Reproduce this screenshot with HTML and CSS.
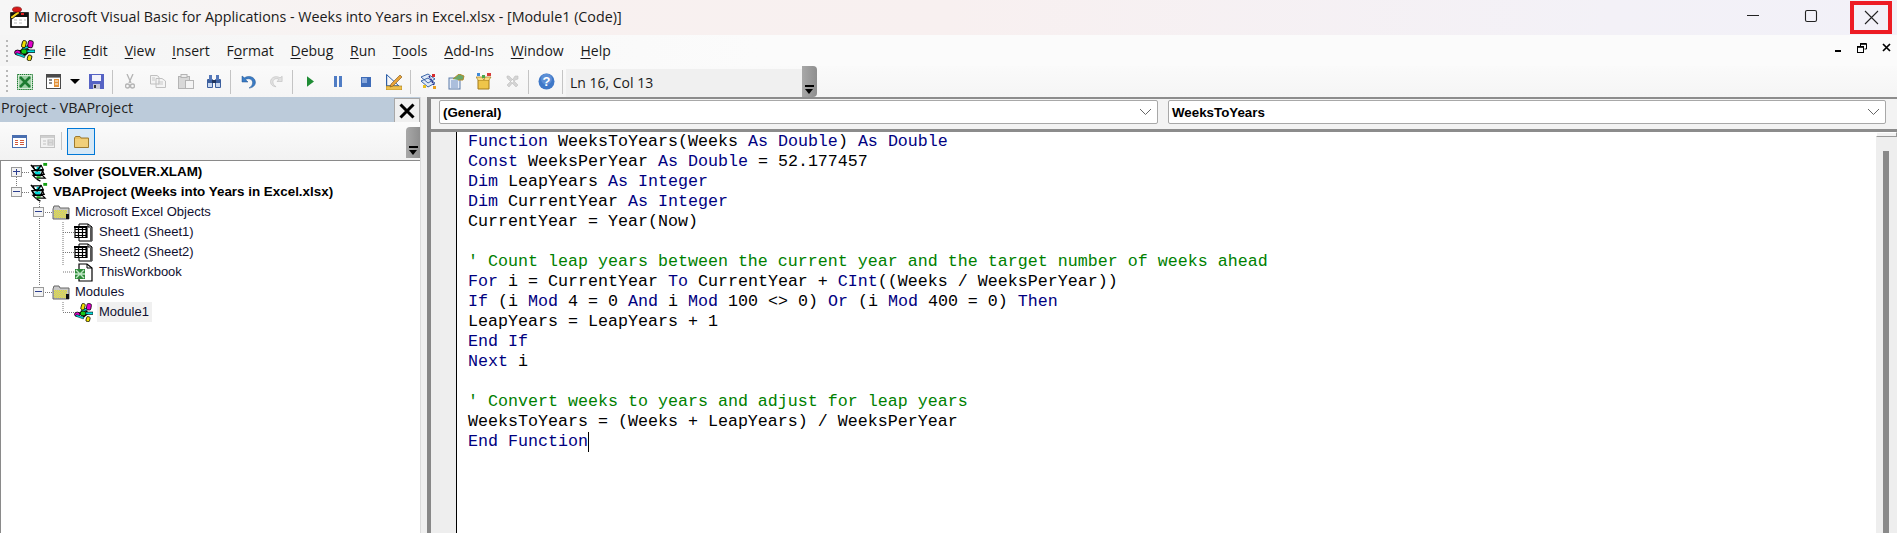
FILE: index.html
```html
<!DOCTYPE html>
<html lang="en">
<head>
<meta charset="utf-8">
<title>Microsoft Visual Basic for Applications</title>
<link rel="stylesheet" href="styles.css">
</head>
<body>
<svg class="defs" width="0" height="0" aria-hidden="true">
  <symbol id="molecule" viewBox="0 0 21 21">
    <path d="M6 11 L12 8 L16 11 L11 15 Z" fill="none" stroke="#000" stroke-width="1.4"/>
    <rect x="8" y="6" width="10" height="2.4" fill="#00e0e0" stroke="#000" stroke-width=".7" transform="rotate(-25 13 7)"/>
    <rect x="11" y="10" width="10" height="2.6" fill="#00e0e0" stroke="#000" stroke-width=".7"/>
    <rect x="8" y="0.6" width="4" height="7" rx="1.6" fill="#f0e000" stroke="#000" stroke-width=".8" transform="rotate(15 10 4)"/>
    <rect x="14" y="0.6" width="5" height="7" rx="1.6" fill="#e000c8" stroke="#000" stroke-width=".8" transform="rotate(10 16 4)"/>
    <ellipse cx="3.6" cy="12.5" rx="3" ry="2.4" fill="#e000c8" stroke="#000" stroke-width=".9"/>
    <rect x="7" y="9" width="6" height="5" rx="2" fill="#14c814" stroke="#000" stroke-width=".8"/>
    <rect x="13.5" y="15" width="4" height="5.6" rx="1.4" fill="#f0e000" stroke="#000" stroke-width=".8" transform="rotate(15 15 18)"/>
    <rect x="2" y="14" width="9" height="2" fill="#00e0e0" stroke="#000" stroke-width=".5" transform="rotate(20 6 15)"/>
  </symbol>
  <symbol id="project" viewBox="0 0 21 21">
    <path d="M4 4 H13 L15 8 H6 Z M3 9 H14 L16 13 H5 Z M4 14 H14 L17 17 H7 Z" fill="#fff" stroke="#000" stroke-width="1.2"/>
    <path d="M6 10 H12 V13 H6 Z" fill="#00d8d8"/>
    <path d="M8 5 H12 V8 H8 Z" fill="#00d8d8"/>
    <path d="M2 3 L6 8 M3 9 L7 14 M13 3 L8 10 M15 8 L12 15 M8 18 L12 20" stroke="#000" stroke-width="1.5" fill="none"/>
    <path d="M15 1 H19 V4 H15 Z" fill="#14a014"/>
    <path d="M8 15 H12 V17 H8 Z" fill="#14a014"/>
  </symbol>
  <pattern id="dither" width="2" height="2" patternUnits="userSpaceOnUse">
    <rect width="2" height="2" fill="#f4ee30"/>
    <rect width="1" height="1" fill="#b4b4a0"/>
    <rect x="1" y="1" width="1" height="1" fill="#b4b4a0"/>
  </pattern>
  <symbol id="tfolder" viewBox="0 0 18 15">
    <path d="M1 4 L2 1 H7 L8 3 H17 V14 H1 Z" fill="#c8c8c8" stroke="#666" stroke-width="1"/>
    <rect x="2" y="5" width="13" height="8" fill="url(#dither)"/>
    <rect x="14" y="9" width="3" height="5" fill="#111"/>
  </symbol>
  <symbol id="sheet" viewBox="0 0 19 19">
    <path d="M5 1 H14 L18 4 V18 H5 Z" fill="#fff" stroke="#000" stroke-width="1"/>
    <path d="M14 1 V4 H18" fill="none" stroke="#000" stroke-width="1"/>
    <path d="M17 5 V18" stroke="#555" stroke-width="2"/>
    <path d="M1 3.5 H13 V14.5 H1 Z M1 6.5 H13 M1 9.5 H13 M1 12.5 H13 M4.5 3 V15 M8.5 3 V15 M12 3 V15" fill="#fff" stroke="#000" stroke-width="1.2"/>
    <path d="M0 4 H13" stroke="#000" stroke-width="2"/>
  </symbol>
  <symbol id="workbook" viewBox="0 0 19 19">
    <path d="M5 1 H13 L18 5 V18 H5 Z" fill="#fff" stroke="#000" stroke-width="1.2"/>
    <path d="M13 1 V5 H18" fill="none" stroke="#000" stroke-width="1"/>
    <rect x="1" y="6" width="10" height="10" fill="#2e8b3a"/>
    <path d="M2 7 L10 15 M10 7 L2 15 M1 11 H11" stroke="#bfe6c5" stroke-width="1.4"/>
  </symbol>
  <symbol id="form" viewBox="0 0 15 15">
    <rect x=".5" y=".5" width="14" height="14" fill="#fff" stroke="#4a4a4a"/>
    <rect x="1" y="1" width="13" height="2.6" fill="#4a4a4a"/>
    <path d="M3 6 H6 M3 9 H6" stroke="#666" stroke-width="1.4"/>
    <rect x="8" y="5" width="5" height="8" fill="#e3933a"/>
    <path d="M9 7 H12 M9 10 H12" stroke="#fff"/>
  </symbol>
</svg>

<div class="window">
  <header class="titlebar">
    <svg class="app-icon" width="20" height="22" viewBox="0 0 20 22">
      <rect x="2" y="7" width="17" height="14" fill="#fff" stroke="#000" stroke-width="1.6"/>
      <rect x="2" y="7" width="17" height="4" fill="#111"/>
      <path d="M5 14 H8 M10 14 H13 M15 14 H17 M5 17 H8 M10 17 H13" stroke="#bbb"/>
      <path d="M1 11 L9 5 L11 7 L3 13 Z" fill="#f0d020" stroke="#000" stroke-width=".8"/>
      <ellipse cx="8" cy="3.5" rx="4.5" ry="2.6" fill="#d81818" stroke="#600" stroke-width=".6"/>
      <rect x="12" y="7" width="3" height="2" fill="#e02020"/>
    </svg>
    <span class="title-text">Microsoft Visual Basic for Applications - Weeks into Years in Excel.xlsx - [Module1 (Code)]</span>
    <div class="win-controls">
      <span class="wc wc-min"><svg width="14" height="14" viewBox="0 0 14 14"><path d="M1 7.5 H13" stroke="#222" stroke-width="1"/></svg></span>
      <span class="wc wc-max"><svg width="14" height="14" viewBox="0 0 14 14"><rect x="1.5" y="1.5" width="11" height="11" rx="1.6" fill="none" stroke="#222" stroke-width="1.1"/></svg></span>
      <span class="wc wc-close"><svg width="15" height="15" viewBox="0 0 15 15"><path d="M1 1 L14 14 M14 1 L1 14" stroke="#222" stroke-width="1.1"/></svg></span>
    </div>
  </header>

  <nav class="menubar">
    <span class="grip"></span>
    <svg class="menu-icon" width="21" height="21"><use href="#molecule"/></svg>
    <span class="menu-item"><u>F</u>ile</span>
    <span class="menu-item"><u>E</u>dit</span>
    <span class="menu-item"><u>V</u>iew</span>
    <span class="menu-item"><u>I</u>nsert</span>
    <span class="menu-item">F<u>o</u>rmat</span>
    <span class="menu-item"><u>D</u>ebug</span>
    <span class="menu-item"><u>R</u>un</span>
    <span class="menu-item"><u>T</u>ools</span>
    <span class="menu-item"><u>A</u>dd-Ins</span>
    <span class="menu-item"><u>W</u>indow</span>
    <span class="menu-item"><u>H</u>elp</span>
    <div class="mdi-controls">
      <svg width="8" height="10" viewBox="0 0 8 10"><rect x="1" y="7" width="6" height="2" fill="#000"/></svg>
      <svg width="10" height="10" viewBox="0 0 10 10"><path d="M3.5 .5 H9.5 V6 H7.5 M3.5 .5 V3" fill="none" stroke="#000"/><path d="M3 1 H9" stroke="#000" stroke-width="1.6"/><rect x=".5" y="3.5" width="6" height="6" fill="none" stroke="#000"/><path d="M0 4 H7" stroke="#000" stroke-width="1.6"/></svg>
      <svg width="9" height="9" viewBox="0 0 9 9"><path d="M1 1 L8 8 M8 1 L1 8" stroke="#000" stroke-width="1.7"/></svg>
    </div>
  </nav>

  <div class="toolbar">
    <span class="grip grip-tall"></span>
    <span class="tb-btn"><svg width="16" height="16" viewBox="0 0 16 16"><rect x=".5" y=".5" width="15" height="15" fill="#d8ecd8" stroke="#1d7a30" stroke-dasharray="1.5 .6"/><rect x="2" y="2" width="12" height="12" fill="#9ccfa4"/><path d="M3 3 L13 13 M13 3 L3 13" stroke="#1d7a30" stroke-width="2.6"/></svg></span>
    <span class="tb-btn"><svg width="15" height="15"><use href="#form"/></svg></span>
    <span class="tb-arrow"></span>
    <span class="tb-btn"><svg width="15" height="15" viewBox="0 0 15 15"><rect width="15" height="15" fill="#5663c4"/><rect x="3" y="1" width="9" height="6" fill="#f2f2fa"/><rect x="4" y="10" width="7" height="5" fill="#c9c9d8"/><rect x="5" y="11" width="2" height="3" fill="#333"/></svg></span>
    <span class="tb-sep"></span>
    <span class="tb-btn"><svg width="10" height="15" viewBox="0 0 10 15"><path d="M2 0 L6 9 M8 0 L4 9" stroke="#b4b4b4" stroke-width="1.3"/><circle cx="2.5" cy="12" r="2" fill="none" stroke="#b4b4b4" stroke-width="1.4"/><circle cx="7.5" cy="12" r="2" fill="none" stroke="#b4b4b4" stroke-width="1.4"/></svg></span>
    <span class="tb-btn"><svg width="16" height="13" viewBox="0 0 16 13"><path d="M.5 .5 H7 L9 2 V9 H.5 Z M6 3.5 H12 L15.5 6 V12.5 H6 Z" fill="#f4f4f4" stroke="#c0c0c0"/><path d="M8 7 H13 M8 9 H13 M2 3 H5 M2 5 H5" stroke="#c8c8c8"/></svg></span>
    <span class="tb-btn"><svg width="16" height="15" viewBox="0 0 16 15"><rect x=".5" y="2.5" width="11" height="12" fill="#d8d8d8" stroke="#b4b4b4"/><rect x="3" y="0.5" width="6" height="3" fill="#ececec" stroke="#b4b4b4"/><rect x="7.5" y="6.5" width="8" height="8" fill="#f4f4f4" stroke="#b4b4b4"/></svg></span>
    <span class="tb-btn"><svg width="16" height="15" viewBox="0 0 16 15"><rect x="1" y="5" width="6" height="9" rx="1" fill="#3c5f9e"/><rect x="9" y="5" width="6" height="9" rx="1" fill="#3c5f9e"/><rect x="3" y="1" width="3" height="5" fill="#5477b8"/><rect x="10" y="1" width="3" height="5" fill="#5477b8"/><rect x="6" y="6" width="4" height="3" fill="#22365e"/><rect x="2" y="9" width="4" height="4" fill="#c8d8f0"/><rect x="10" y="9" width="4" height="4" fill="#c8d8f0"/></svg></span>
    <span class="tb-sep"></span>
    <span class="tb-btn"><svg width="15" height="14" viewBox="0 0 15 14"><path d="M1 1 V7 H7 L4.5 4.6 C7 3 11 3.6 11.6 7 C12 9.6 10 12 8 13 C11.6 13 14.6 10.4 14.4 7 C14 2 8 -.2 3.4 2.8 Z" fill="#3a7cc6" stroke="#23528c" stroke-width=".5"/></svg></span>
    <span class="tb-btn"><svg width="13" height="13" viewBox="0 0 15 14"><path d="M14 1 V7 H8 L10.5 4.6 C8 3 4 3.6 3.4 7 C3 9.6 5 12 7 13 C3.4 13 .4 10.4 .6 7 C1 2 7 -.2 11.6 2.8 Z" fill="#e2e2e2" stroke="#bcbcbc" stroke-width=".7"/></svg></span>
    <span class="tb-sep"></span>
    <span class="tb-btn"><svg width="7" height="11" viewBox="0 0 8 12"><path d="M0 0 L8 6 L0 12 Z" fill="#1e8c34"/></svg></span>
    <span class="tb-btn"><svg width="8" height="11" viewBox="0 0 8 11"><rect x="0" width="3" height="11" fill="#4f7cc4"/><rect x="5" width="3" height="11" fill="#4f7cc4"/></svg></span>
    <span class="tb-btn"><svg width="10" height="10" viewBox="0 0 10 10"><rect width="10" height="10" fill="#3e6cb8"/><rect x="1" y="1" width="5" height="5" fill="#88a8dc"/></svg></span>
    <span class="tb-btn"><svg width="16" height="16" viewBox="0 0 16 16"><path d="M.5 .5 V12 H12" fill="none" stroke="#2d5fa8" stroke-width="1.4"/><path d="M.5 .5 L13 12" stroke="#2d5fa8"/><rect x="0" y="12" width="16" height="4" fill="#eec04a" stroke="#9a7520" stroke-width=".6"/><path d="M5 10 L14 1 L16 3 L7 12 L4 13 Z" fill="#e8a438" stroke="#7a5218" stroke-width=".6"/></svg></span>
    <span class="tb-sep"></span>
    <span class="tb-btn"><svg width="17" height="17" viewBox="0 0 17 17"><path d="M1 4 L8 1 L15 6 L8 10 Z M1 8 L8 5 L15 10 L8 14 Z" fill="#dfe9f8" stroke="#3c66a8"/><path d="M9 3 L14 12" stroke="#2c2c8c" stroke-width="1.5" stroke-dasharray="2 1"/><rect x="12" y="1" width="3" height="3" fill="#d82c2c"/><rect x="13" y="13" width="3" height="3" fill="#e8a020"/><rect x="3" y="12" width="3" height="3" fill="#e8c020"/></svg></span>
    <span class="tb-btn"><svg width="17" height="16" viewBox="0 0 17 16"><rect x="1" y="4" width="11" height="11" fill="#e6edf8" stroke="#5a7aa8"/><path d="M3 7 H10 M3 9 H10 M3 11 H10 M3 13 H10" stroke="#7090c0"/><path d="M5 5 L11 0 L16 2 L15 6 L10 6" fill="#6aa86a" stroke="#b08a2a"/></svg></span>
    <span class="tb-btn"><svg width="16" height="17" viewBox="0 0 16 17"><path d="M2 7 H13 V16 H2 Z" fill="#efc54a" stroke="#a47a18"/><path d="M2 7 L0 4 H6 L8 7 M13 7 L15 4 H9 L8 7" fill="#f6dc86" stroke="#a47a18" stroke-width=".7"/><rect x="1" y="0" width="3" height="3" fill="#3f8ad8"/><rect x="6" y="2" width="3" height="3" fill="#4aa84a"/><rect x="11" y="0" width="4" height="3" fill="#d83c3c"/></svg></span>
    <span class="tb-btn"><svg width="13" height="13" viewBox="0 0 13 13"><path d="M1 1 L3 1 L12 10 L10 12 L1 3 Z M12 1 L9 1 L7 4 L1 10 L3 12 L9 5 L12 4 Z" fill="#d4d4d4" stroke="#c0c0c0" stroke-width=".6"/></svg></span>
    <span class="tb-sep"></span>
    <span class="tb-btn"><svg width="17" height="17" viewBox="0 0 17 17"><circle cx="8.5" cy="8.5" r="8" fill="#3f78c8"/><circle cx="8.5" cy="6" r="5.5" fill="#6f9fe0" opacity=".6"/><text x="8.5" y="13" class="help-q">?</text></svg></span>
    <span class="tb-sep"></span>
    <div class="status-box">Ln 16, Col 13</div>
    <span class="gripper gripper-tb"><i></i></span>
  </div>

  <main class="main">
    <section class="project">
      <div class="project-head">
        <span class="project-title">Project - VBAProject</span>
        <span class="project-close"><svg width="16" height="16" viewBox="0 0 16 16"><path d="M1.5 1.5 L14.5 14.5 M14.5 1.5 L1.5 14.5" stroke="#000" stroke-width="3"/></svg></span>
      </div>
      <div class="project-tools">
        <span class="pt-btn"><svg width="15" height="13" viewBox="0 0 15 13"><rect x=".5" y=".5" width="14" height="12" fill="#fff" stroke="#4a6fb0"/><rect x="1" y="1" width="13" height="2" fill="#4a6fb0"/><path d="M3 5.5 H6 M8 5.5 H12 M3 7.5 H6 M8 7.5 H12 M3 9.5 H6 M8 9.5 H12" stroke="#d05a3c"/></svg></span>
        <span class="pt-btn"><svg width="15" height="13" viewBox="0 0 15 13"><rect x=".5" y=".5" width="14" height="12" fill="#f2f2f2" stroke="#c4c4c4"/><rect x="1" y="1" width="13" height="2" fill="#cfcfcf"/><path d="M3 6 H6 M3 9 H6" stroke="#c0c0c0"/><rect x="8" y="5" width="5" height="2" fill="none" stroke="#c0c0c0"/><rect x="8" y="8" width="5" height="2" fill="none" stroke="#c0c0c0"/></svg></span>
        <span class="pt-sep"></span>
        <span class="pt-btn pt-active"><svg width="15" height="12" viewBox="0 0 15 12"><path d="M.5 2 L1.5 .5 H6 L7 2 H14.5 V11.5 H.5 Z" fill="#e8c060" stroke="#9c7a30"/><rect x="1" y="3" width="13" height="8" fill="#f0cf7a"/></svg></span>
        <span class="gripper gripper-pt"><i></i></span>
      </div>
      <div class="tree">
        <svg class="tree-lines" width="120" height="170" viewBox="0 0 120 170">
          <path d="M15.5 16 V25 M21 11.5 H28 M21 31.5 H28 M38.5 41 V105 M44 51.5 H52 M62 61 V105 M62 71.5 H74 M62 91.5 H74 M62 111 H74 M44 131.5 H52 M62 141 V150 M62 151.5 H74 M38.5 105 V125" fill="none" stroke="#777" stroke-width="1" stroke-dasharray="1 1"/>
        </svg>
        <div class="tree-row lvl0"><span class="exp exp-plus"></span><svg class="ti" width="20" height="20"><use href="#project"/></svg><span class="label bold">Solver (SOLVER.XLAM)</span></div>
        <div class="tree-row lvl0"><span class="exp"></span><svg class="ti" width="20" height="20"><use href="#project"/></svg><span class="label bold">VBAProject (Weeks into Years in Excel.xlsx)</span></div>
        <div class="tree-row lvl1"><span class="exp"></span><svg class="tf" width="18" height="15"><use href="#tfolder"/></svg><span class="label">Microsoft Excel Objects</span></div>
        <div class="tree-row lvl2"><svg class="ts" width="19" height="19"><use href="#sheet"/></svg><span class="label">Sheet1 (Sheet1)</span></div>
        <div class="tree-row lvl2"><svg class="ts" width="19" height="19"><use href="#sheet"/></svg><span class="label">Sheet2 (Sheet2)</span></div>
        <div class="tree-row lvl2"><svg class="ts" width="19" height="19"><use href="#workbook"/></svg><span class="label">ThisWorkbook</span></div>
        <div class="tree-row lvl1"><span class="exp"></span><svg class="tf" width="18" height="15"><use href="#tfolder"/></svg><span class="label">Modules</span></div>
        <div class="tree-row lvl2"><svg class="ts" width="19" height="19"><use href="#molecule"/></svg><span class="label selected">Module1</span></div>
      </div>
    </section>

    <section class="code-pane">
      <div class="combos">
        <div class="combo combo-left"><span>(General)</span><svg width="13" height="8" viewBox="0 0 13 8"><path d="M1 1 L6.5 6.5 L12 1" fill="none" stroke="#666"/></svg></div>
        <div class="combo combo-right"><span>WeeksToYears</span><svg width="13" height="8" viewBox="0 0 13 8"><path d="M1 1 L6.5 6.5 L12 1" fill="none" stroke="#666"/></svg></div>
      </div>
      <div class="editor">
        <div class="gutter"></div>
        <div class="code">
          <div class="ln"><b>Function</b> WeeksToYears(Weeks <b>As</b> <b>Double</b>) <b>As</b> <b>Double</b></div>
          <div class="ln"><b>Const</b> WeeksPerYear <b>As</b> <b>Double</b> = 52.177457</div>
          <div class="ln"><b>Dim</b> LeapYears <b>As</b> <b>Integer</b></div>
          <div class="ln"><b>Dim</b> CurrentYear <b>As</b> <b>Integer</b></div>
          <div class="ln">CurrentYear = Year(Now)</div>
          <div class="ln"></div>
          <div class="ln cm">' Count leap years between the current year and the target number of weeks ahead</div>
          <div class="ln"><b>For</b> i = CurrentYear <b>To</b> CurrentYear + <b>CInt</b>((Weeks / WeeksPerYear))</div>
          <div class="ln"><b>If</b> (i <b>Mod</b> 4 = 0 <b>And</b> i <b>Mod</b> 100 &lt;&gt; 0) <b>Or</b> (i <b>Mod</b> 400 = 0) <b>Then</b></div>
          <div class="ln">LeapYears = LeapYears + 1</div>
          <div class="ln"><b>End</b> <b>If</b></div>
          <div class="ln"><b>Next</b> i</div>
          <div class="ln"></div>
          <div class="ln cm">' Convert weeks to years and adjust for leap years</div>
          <div class="ln">WeeksToYears = (Weeks + LeapYears) / WeeksPerYear</div>
          <div class="ln"><b>End</b> <b>Function</b><span class="caret"></span></div>
        </div>
        <div class="vscroll"><span class="thumb"></span><span class="vtrack"></span></div>
      </div>
    </section>
  </main>
</div>
</body>
</html>
```

FILE: styles.css
```css
html, body { margin: 0; padding: 0; }
body { width: 1897px; height: 533px; overflow: hidden; background: #fff; color: #000; }
.defs { position: absolute; }
.window { width: 1897px; height: 533px; display: flex; flex-direction: column; overflow: hidden; }

.titlebar { height: 35px; flex: none; display: flex; align-items: center; padding-left: 9px; box-sizing: border-box;
  background: linear-gradient(90deg, #f6f6f6 0, #f8f1f0 25%, #f8f0f0 50%, #f3f1f7 85%, #f2f1f8 100%); }
.app-icon { flex: none; margin-right: 5px; margin-top: -1px; }
.title-text { font: 14.3px "Open Sans", sans-serif; color: #1a1a1a; white-space: nowrap; margin-top: -3px; }
.win-controls { margin-left: auto; display: flex; height: 35px; align-items: center; }
.wc { display: flex; align-items: center; justify-content: center; box-sizing: border-box; }
.wc-min { width: 58px; margin-top: -5px; }
.wc-max { width: 58px; margin-top: -4px; margin-right: 10px; }
.wc-close { width: 42px; height: 33px; border: 4px solid #ed1c24; margin-right: 5px; margin-top: -1px; }

.menubar { height: 31px; flex: none; display: flex; align-items: center; position: relative;
  background: linear-gradient(90deg, #f5f5f5 0, #f7f7f7 15%, #fbfbfb 40%, #fbfbfb 100%); }
.grip { flex: none; width: 2px; height: 22px; margin-left: 6px; margin-right: 6px;
  background: repeating-linear-gradient(180deg, #b8b8b8 0 2px, transparent 2px 5px); }
.menu-icon { flex: none; margin-right: 9px; }
.menu-item { font: 14px "Open Sans", sans-serif; color: #1a1a1a; white-space: nowrap; margin-right: 16.8px; }
.menu-item u { text-underline-offset: 2px; text-decoration-thickness: 1px; }
.mdi-controls { margin-left: auto; display: flex; align-items: center; gap: 15px; padding-right: 6px; margin-top: -6px; }

.toolbar { height: 31px; flex: none; display: flex; align-items: center; box-sizing: border-box;
  background: linear-gradient(180deg, #fafafa 0, #f5f5f5 100%); }
.toolbar .grip-tall { margin-right: 3px; height: 24px; }
.tb-btn { flex: none; width: 28px; height: 28px; display: flex; align-items: center; justify-content: center; }
.tb-arrow { flex: none; width: 0; height: 0; margin: 0 2px 0 3px; border-left: 5px solid transparent; border-right: 5px solid transparent; border-top: 5px solid #000; }
.tb-sep { flex: none; width: 1px; height: 24px; background: #c4c4c4; margin: 0 3px 0 2px; }
.help-q { font: bold 13px "Liberation Sans", sans-serif; fill: #fff; text-anchor: middle; }
.status-box { flex: none; width: 236px; height: 28px; margin-top: 3px; padding-left: 4px; box-sizing: border-box; background: #f0f0f0;
  font: 14px/28px "Open Sans", sans-serif; color: #1a1a1a; }
.gripper { flex: none; display: block; position: relative; background: linear-gradient(90deg, #a8a8a8, #8e8e8e); border-radius: 0 4px 4px 0; }
.gripper i { position: absolute; left: 3px; bottom: 3px; width: 0; height: 0; border-left: 4.5px solid transparent; border-right: 4.5px solid transparent; border-top: 5px solid #000; }
.gripper i::before { content: ""; position: absolute; left: -4.5px; top: -9px; width: 9px; height: 2px; background: #000; }
.gripper-tb { width: 15px; height: 31px; }

.main { flex: 1; display: flex; min-height: 0; background: #f0f0f0; }
.project { width: 420px; flex: none; display: flex; flex-direction: column; position: relative; border-right: 1px solid #dcdcdc; }
.project-head { height: 25px; flex: none; background: #bccbda; display: flex; align-items: center; }
.project-title { font: 14.3px "Open Sans", sans-serif; color: #222; padding-left: 1px; margin-top: -4px; }
.project-close { position: absolute; left: 394px; top: 1px; width: 26px; height: 25px; box-sizing: border-box; background: #f0f0f0; border: 1px solid #a8a8a8; display: flex; align-items: center; justify-content: center; }
.project-tools { height: 38px; flex: none; display: flex; align-items: center; padding-left: 5px; box-sizing: border-box;
  background: linear-gradient(180deg, #fbfbfb 0, #f2f2f2 100%); position: relative; }
.pt-btn { flex: none; width: 28px; height: 27px; display: flex; align-items: center; justify-content: center; box-sizing: border-box; margin-top: 1px; }
.pt-sep { flex: none; width: 1px; height: 18px; background: #c4c4c4; margin: 0 2px 0 0; }
.pt-btn.pt-active { border: 1px solid #0078d7; background: #d6e8f6; margin-left: 3px; }
.gripper-pt { position: absolute; right: 0; top: 5px; width: 14px; height: 31px; border-radius: 4px 0 0 0; }
.tree { flex: 1; background: #fff; border-top: 1px solid #8a8a8a; border-left: 1px solid #8a8a8a; position: relative; padding-top: 1px; }
.tree-lines { position: absolute; left: 0; top: 0; pointer-events: none; }
.tree-row { height: 20px; display: flex; align-items: center; position: relative; }
.lvl0 { padding-left: 10px; }
.lvl1 { padding-left: 32px; }
.lvl2 { padding-left: 73px; }
.exp { flex: none; width: 11px; height: 10px; box-sizing: border-box; border: 1px solid #9a9a9a; background: #f3f3f3; position: relative; }
.exp::before { content: ""; position: absolute; left: 1px; right: 1px; top: 3px; height: 1px; background: #2d3f8f; }
.exp-plus::after { content: ""; position: absolute; top: 1px; bottom: 1px; left: 4px; width: 1px; background: #2d3f8f; }
.lvl0 .exp { margin-right: 7px; }
.lvl1 .exp { margin-right: 8px; }
.ti { flex: none; margin-right: 4px; }
.tf { flex: none; margin-right: 5px; }
.ts { flex: none; margin-right: 6px; }
.label { font: 13px/20px "Liberation Sans", sans-serif; color: #101030; white-space: nowrap; }
.label.bold { font-size: 13.4px; font-weight: bold; color: #000; }
.label.selected { background: #f0f0f0; padding: 0 3px 0 2px; margin-left: -2px; }

.code-pane { flex: 1; min-width: 0; display: flex; flex-direction: column; margin-left: 6px; border-left: 4px solid #888; border-top: 2px solid #8c8c8c; background: #f0f0f0; }
.combos { height: 30px; flex: none; display: flex; box-sizing: border-box; padding: 1px 11px 0 8px; gap: 10px; background: #f3f3f3; }
.combo { height: 24px; background: #fff; border: 1px solid #a8a8a8; border-radius: 2px; box-sizing: border-box; display: flex; align-items: center; justify-content: space-between; padding: 0 5px 0 3px;
  font: bold 13.33px "Liberation Sans", sans-serif; }
.combo-left { width: 719px; flex: none; }
.combo-right { flex: 1; }
.editor { flex: 1; display: flex; min-height: 0; border-top: 3px solid #8c8c8c; background: #fff; }
.gutter { width: 25px; flex: none; background: #eeeeee; border-right: 1px solid #000; }
.code { flex: 1; padding: 0 0 0 11px; }
.ln { height: 20px; font: 16.67px/20px "Liberation Mono", monospace; color: #000; white-space: pre; }
.ln b { font-weight: normal; color: #00007f; }
.ln.cm { color: #008000; }
.caret { display: inline-block; width: 1px; height: 20px; background: #000; vertical-align: top; }
.vscroll { width: 21px; flex: none; background: #eeeeee; position: relative; }
.thumb { display: block; height: 5px; background: #f2f2f2; border: 1px solid #9a9a9a; border-left-color: #fff; border-top-color: #fff; box-sizing: border-box; margin-top: 0; }
.vtrack { position: absolute; left: 7px; top: 19px; bottom: 0; width: 6px; background: #8a8a8a; }
```
